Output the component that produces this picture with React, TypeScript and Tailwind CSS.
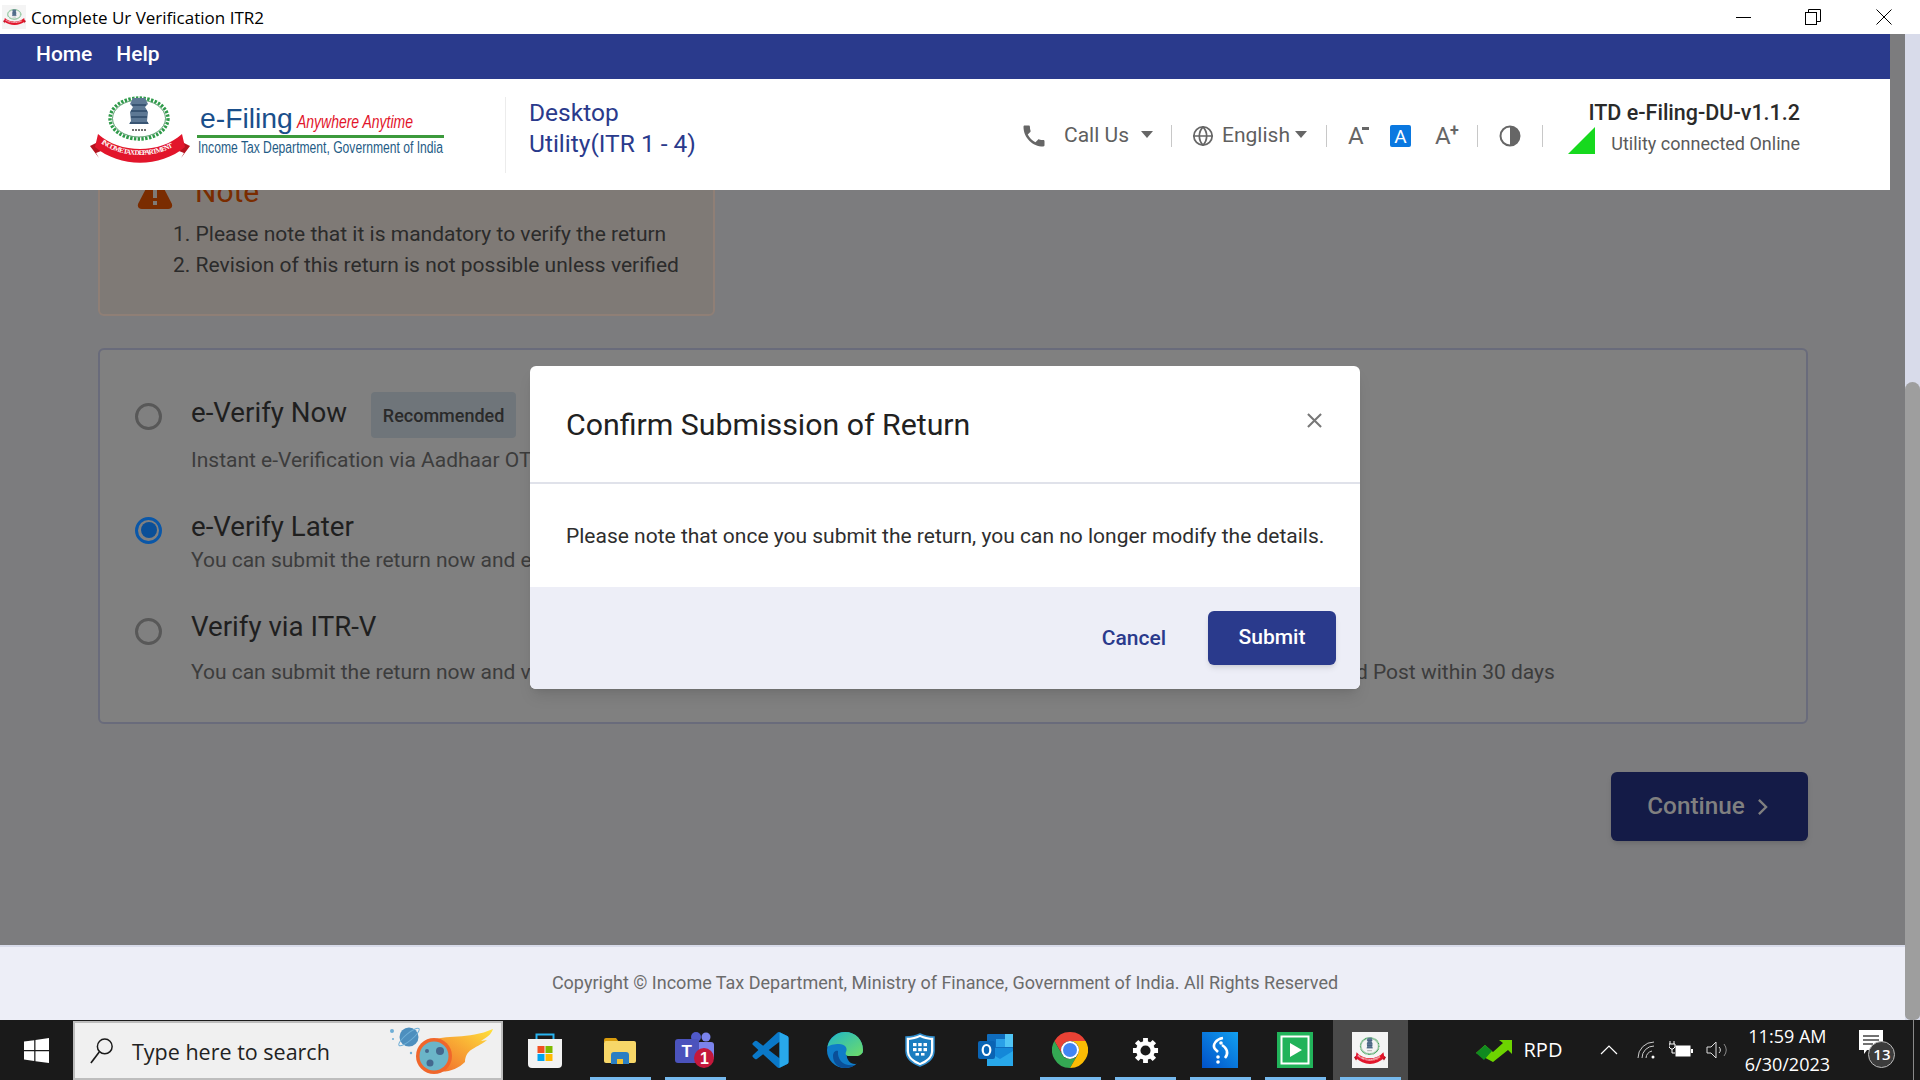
import React from "react";
import { Globe } from "lucide-react";

const roboto = "font-['Roboto',sans-serif]";

function Seal({ className, id }: { className?: string; id: string }) {
  return (
    <svg viewBox="0 0 100 67" preserveAspectRatio="none" className={className}>
      <ellipse cx="49" cy="22.5" rx="29" ry="20.5" fill="none" stroke="#2f9a4a" strokeWidth="3.4" strokeDasharray="2.4 1.4" />
      <ellipse cx="49" cy="22.5" rx="26.5" ry="18.5" fill="none" stroke="#1c7a38" strokeWidth="0.7" />
      <path d="M43 2h12l3 6-3 3 3 5-1 9 2 3H39l2-3-1-9 3-5-3-3z" fill="#5d7894" />
      <path d="M42 9h14M41 15h16M41 21h16M40 27h18" stroke="#2e4a68" strokeWidth="1.4" />
      <path d="M42 34h14" stroke="#444" strokeWidth="1.6" strokeDasharray="2 1" />
      <path d="M0 50l8-4 3 9-5 2 3 5z" fill="#b5121e" />
      <path d="M100 50l-8-4-3 9 5 2-3 5z" fill="#b5121e" />
      <path d="M8 46l5 8 2-3z" fill="#23468f" />
      <path d="M92 46l-5 8-2-3z" fill="#23468f" />
      <path d="M8 38C30 58 70 58 92 38l3 13C70 72 30 72 5 51z" fill="#e2152b" />
      <path id={id} d="M11 47C32 63 68 63 89 47" fill="none" />
      <text fill="#fff" fontSize="7" fontWeight="700" fontFamily="Liberation Serif, serif">
        <textPath href={`#${id}`} textLength="76">INCOME TAX DEPARTMENT</textPath>
      </text>
    </svg>
  );
}

function Logo() {
  return (
    <div className="w-[360px] h-[70px] flex items-start shrink-0 mb-[7px]">
      <Seal id="ribLogo" className="w-[100px] h-[67px] shrink-0" />
      <svg viewBox="0 0 260 70" className="w-[260px] h-[70px] shrink-0">
        <text x="10" y="31.5" fontSize="28.3" fill="#1a4f8b" fontFamily="Liberation Sans, sans-serif">e-Filing</text>
        <text x="107" y="32" fontSize="18" fontStyle="italic" fill="#e2152b" fontFamily="Liberation Sans, sans-serif" textLength="116" lengthAdjust="spacingAndGlyphs">Anywhere Anytime</text>
        <rect x="7" y="39" width="247" height="3" fill="#3c9a3c" />
        <text x="8" y="57" fontSize="16" fill="#1f5c86" fontFamily="Liberation Sans, sans-serif" textLength="245" lengthAdjust="spacingAndGlyphs">Income Tax Department, Government of India</text>
      </svg>
    </div>
  );
}

function Sep({ ml }: { ml: string }) {
  return <div className={`w-[1px] h-[22px] bg-[#c8c8c8] shrink-0 ${ml}`} />;
}

function Caret({ ml }: { ml: string }) {
  return <div className={`w-0 h-0 border-l-[6px] border-r-[6px] border-t-[7px] border-l-transparent border-r-transparent border-t-[#666] mb-[4px] shrink-0 ${ml}`} />;
}

function Toolbar() {
  return (
    <div className={`flex items-center text-[21px] text-[#5f5f5f] mt-[3px] ${roboto}`}>
      <svg viewBox="0 0 24 24" className="w-[28px] h-[28px] shrink-0" fill="#666">
        <path d="M6.62 10.79c1.44 2.83 3.76 5.14 6.59 6.59l2.2-2.2c.27-.27.67-.36 1.02-.24 1.12.37 2.33.57 3.57.57.55 0 1 .45 1 1V20c0 .55-.45 1-1 1-9.39 0-17-7.61-17-17 0-.55.45-1 1-1h3.5c.55 0 1 .45 1 1 0 1.25.2 2.45.57 3.57.11.35.03.74-.25 1.02l-2.2 2.2z" />
      </svg>
      <span className="ml-[16px] w-[66px] whitespace-nowrap">Call Us</span>
      <Caret ml="ml-[11px]" />
      <Sep ml="ml-[18px]" />
      <Globe className="w-[22px] h-[22px] ml-[20px] shrink-0" strokeWidth={1.9} color="#666" />
      <span className="ml-[8px] w-[70px] whitespace-nowrap">English</span>
      <Caret ml="ml-[3px]" />
      <Sep ml="ml-[19px]" />
      <div className="ml-[21px] w-[20px] h-[24px] relative text-[24px] leading-[24px] text-[#666]">
        A<span className="absolute left-[14px] top-[3px] w-[7px] h-[2.5px] bg-[#666]" />
      </div>
      <div className="ml-[22px] w-[21px] h-[22px] bg-[#0a78e0] rounded-[2px] flex items-center justify-center text-white text-[19px] leading-none">A</div>
      <div className="ml-[24px] w-[22px] h-[24px] relative text-[24px] leading-[24px] text-[#666]">
        A<span className="absolute left-[15px] top-[-5px] text-[16px] font-bold">+</span>
      </div>
      <Sep ml="ml-[20px]" />
      <svg viewBox="0 0 22 22" className="w-[22px] h-[22px] ml-[21px] shrink-0">
        <circle cx="11" cy="11" r="9.5" fill="none" stroke="#666" strokeWidth="2" />
        <path d="M11 1.5a9.5 9.5 0 0 1 0 19z" fill="#666" />
      </svg>
      <Sep ml="ml-[21px]" />
    </div>
  );
}

function Status() {
  return (
    <div className={`ml-[25px] w-[232px] flex flex-col mb-[14px] ${roboto}`}>
      <div className="h-[31px] leading-[31px] text-right text-[21.5px] font-medium text-[#2a2a2a] whitespace-nowrap">ITD e-Filing-DU-v1.1.2</div>
      <div className="h-[31px] flex items-center justify-between">
        <svg viewBox="0 0 27 27" className="w-[27px] h-[27px] shrink-0 mb-[5px]"><path d="M27 0V27H0z" fill="#16d91e" /></svg>
        <span className="text-[18px] leading-[31px] text-[#5a5a5a] whitespace-nowrap">Utility connected Online</span>
      </div>
    </div>
  );
}

function Radio({ on }: { on?: boolean }) {
  return (
    <div className="w-[27px] h-[34px] flex items-center mt-[4px] shrink-0">
      {on ? (
        <div className="w-[27px] h-[27px] rounded-full border-[3px] border-[#0a57a8] flex items-center justify-center">
          <div className="w-[16px] h-[16px] rounded-full bg-[#0a4f98]" />
        </div>
      ) : (
        <div className="w-[27px] h-[27px] rounded-full border-[3px] border-[#585858]" />
      )}
    </div>
  );
}

function Option({ on, label, pill, sub, mt, gap, lift }: { on?: boolean; label: string; pill?: boolean; sub: string; mt: string; gap: string; lift?: boolean }) {
  return (
    <div className={`flex gap-[29px] ${mt}`}>
      <Radio on={on} />
      <div className="flex flex-col">
        <div className={`h-[34px] flex items-center text-[27.7px] text-[#1f1f1f] whitespace-nowrap ${lift ? "" : "pt-[2px]"}`}>
          {label}
          {pill && (
            <span className="ml-[24px] w-[145px] h-[46px] mt-[4px] shrink-0 rounded-[4px] bg-[#6f757a] text-[18px] font-medium text-[#2a2a2a] flex items-center justify-center">Recommended</span>
          )}
        </div>
        <div className={`h-[30px] leading-[30px] text-[21px] text-[#3c3c3c] whitespace-nowrap ${gap}`}>{sub}</div>
      </div>
    </div>
  );
}

function Content() {
  return (
    <div className={`flex-1 overflow-hidden pl-[98px] pr-[97px] ${roboto}`}>
      <div className="-mt-[50px] w-[617px] h-[176px] rounded-[6px] border-[2px] border-[#8f7f76] bg-[#7f7a76] flex pl-[37px]">
        <svg viewBox="0 0 36 36" className="w-[36px] h-[36px] mt-[32px] shrink-0">
          <path d="M18 2c1.6 0 2.8.8 3.6 2.2l13 25c1.5 3-.2 5.8-3.4 5.8H4.8c-3.2 0-4.9-2.8-3.4-5.8l13-25C15.2 2.8 16.4 2 18 2z" fill="#7a2c00" />
          <rect x="16" y="14" width="4" height="10" fill="#7f7a76" />
          <rect x="16" y="27" width="4" height="4" fill="#7f7a76" />
        </svg>
        <div className="ml-[22px] flex flex-col">
          <div className="h-[36px] mt-[32px] leading-[36px] text-[30px] text-[#7a2c00]">Note</div>
          <ol className="mt-[9px] -ml-[22px] text-[21px] leading-[31px] text-[#2b2b2b] whitespace-nowrap">
            <li>1. Please note that it is mandatory to verify the return</li>
            <li>2. Revision of this return is not possible unless verified</li>
          </ol>
        </div>
      </div>
      <div className="mt-[32px] h-[376px] rounded-[6px] border-[2px] border-[#696b7b] bg-[#808080] pl-[35px] pt-[45px]">
        <Option label="e-Verify Now" pill sub="Instant e-Verification via Aadhaar OTP" mt="" gap="mt-[16px]" />
        <Option on label="e-Verify Later" sub="You can submit the return now and e-Verify later" mt="mt-[34px]" gap="mt-[2px]" />
        <Option lift label="Verify via ITR-V" sub="You can submit the return now and verify by sending signed physical copy of ITR-V to Centralized Processing Centers by Speed Post within 30 days" mt="mt-[35px]" gap="mt-[13px]" />
      </div>
      <div className="mt-[48px] flex justify-end">
        <button className="w-[197px] h-[69px] pr-[4px] rounded-[6px] bg-[#141b47] shadow-md text-[#808080] text-[24.3px] font-medium flex items-center justify-center gap-[12px]">
          Continue
          <svg viewBox="0 0 12 20" className="w-[11px] h-[18px]"><path d="M2 2l8 8-8 8" fill="none" stroke="#808080" strokeWidth="2.6" /></svg>
        </button>
      </div>
    </div>
  );
}

function Modal() {
  return (
    <div className={`absolute left-[530px] top-[366px] w-[830px] h-[323px] rounded-[6px] overflow-hidden bg-white flex flex-col shadow-lg ${roboto}`}>
      <div className="h-[118px] border-b-[2px] border-[#e0e2ea] flex items-start justify-between pl-[36px] pr-[38px] shrink-0">
        <span className="mt-[41px] text-[30.3px] leading-[36px] text-[#212121]">Confirm Submission of Return</span>
        <svg viewBox="0 0 16 16" className="w-[15px] h-[15px] mt-[47px]"><path d="M1 1l14 14M15 1L1 15" stroke="#777" strokeWidth="2.2" /></svg>
      </div>
      <div className="h-[103px] pl-[36px] pt-[37px] text-[21px] leading-[30px] text-[#2e2e2e] whitespace-nowrap shrink-0">
        Please note that once you submit the return, you can no longer modify the details.
      </div>
      <div className="flex-1 bg-[#edeef7] flex justify-end items-start pt-[24px] pr-[24px]">
        <span className="mt-[13px] text-[21px] leading-[28px] font-medium text-[#2a3a8c]">Cancel</span>
        <button className="ml-[42px] w-[128px] h-[54px] rounded-[6px] bg-[#2a3a8c] shadow-md text-white text-[21px] font-medium">Submit</button>
      </div>
    </div>
  );
}

const Store = () => (
  <svg viewBox="0 0 36 36" className="w-[36px] h-[36px]">
    <path d="M9.5 8V2.5h17V8" fill="none" stroke="#28b4f0" strokeWidth="2" />
    <path d="M1 7h34v25a4 4 0 0 1-4 4H5a4 4 0 0 1-4-4z" fill="#f2f2f2" />
    <rect x="10.5" y="14" width="7" height="7" fill="#f25022" />
    <rect x="18.5" y="14" width="7" height="7" fill="#7fba00" />
    <rect x="10.5" y="22" width="7" height="7" fill="#00a4ef" />
    <rect x="18.5" y="22" width="7" height="7" fill="#ffb900" />
  </svg>
);
const Explorer = () => (
  <svg viewBox="0 0 32 27" className="w-[32px] h-[27px]">
    <path d="M0 3a2 2 0 0 1 2-2h10l3 4H0z" fill="#d89b0c" />
    <rect x="0" y="4" width="32" height="22" rx="2" fill="#f7d768" />
    <path d="M7 27V18a3 3 0 0 1 3-3h12a3 3 0 0 1 3 3v9h-6v-5h-6v5z" fill="#2a7fc4" />
    <rect x="13" y="22" width="6" height="5" fill="#f2c230" />
  </svg>
);
const Teams = () => (
  <svg viewBox="0 0 40 36" className="w-[40px] h-[36px]">
    <circle cx="31" cy="5" r="4.5" fill="#7b83eb" />
    <circle cx="21" cy="5" r="5" fill="#5059c9" />
    <rect x="22" y="10" width="17" height="18" rx="3" fill="#7b83eb" />
    <rect x="0" y="7" width="24" height="24" rx="3" fill="#4b53bc" />
    <text x="6.5" y="25" fontSize="17" fontWeight="700" fill="#fff" fontFamily="Liberation Sans, sans-serif">T</text>
    <circle cx="29" cy="26" r="10" fill="#c4183c" />
    <text x="25" y="32" fontSize="16" fontWeight="700" fill="#fff" fontFamily="Liberation Sans, sans-serif">1</text>
  </svg>
);
const VSCode = () => (
  <svg viewBox="0 0 100 100" className="w-[37px] h-[36px]">
    <path fillRule="evenodd" d="M70.9 99.3a6.2 6.2 0 0 0 5-.2l20.6-9.9a6.2 6.2 0 0 0 3.5-5.6V16.4a6.2 6.2 0 0 0-3.5-5.6L75.9.9a6.2 6.2 0 0 0-7.1 1.2L29.4 38 12.2 25a4.2 4.2 0 0 0-5.3.2l-5.5 5a4.2 4.2 0 0 0 0 6.2L16.3 50 1.4 63.6a4.2 4.2 0 0 0 0 6.2l5.5 5a4.2 4.2 0 0 0 5.3.2L29.4 62l39.4 36a6.2 6.2 0 0 0 2.1 1.3zM75 27.3 45.1 50 75 72.7z" fill="#0a78c8" />
    <path d="M75 .5l21.5 10.3a6.2 6.2 0 0 1 3.5 5.6v67.2a6.2 6.2 0 0 1-3.5 5.6L75 99.5z" fill="#28a8ea" />
  </svg>
);
const Edge = () => (
  <svg viewBox="0 0 36 36" className="w-[36px] h-[36px]">
    <defs>
      <linearGradient id="edgeA" x1="0" y1="0" x2="1" y2="1">
        <stop offset="0" stopColor="#1fb5c8" />
        <stop offset="1" stopColor="#6fdc68" />
      </linearGradient>
    </defs>
    <circle cx="18" cy="18" r="18" fill="#0f7cc8" />
    <path d="M20 21h16v7c-3 4-8 5-12 3-3-2-5-6-4-10z" fill="#1a1a1a" />
    <path d="M.5 15C2 6 10 0 18 0c11 0 18 8 18 18 0 4-3 6-7 6h-7c-3 0-4-2-3-4 2-4-1-8-7-8-5 0-10 1-11.5 3z" fill="url(#edgeA)" />
    <path d="M11 19c-1 9 6 16 17 14-3 2-6 3-10 3-8 0-12-6-12-12 0-3 2-6 5-5z" fill="#0a4f98" />
  </svg>
);
const Shield = () => (
  <svg viewBox="0 0 30 34" className="w-[30px] h-[34px]">
    <path d="M15 1c4 2 9 3 14 3v14c0 8-6 12-14 15C7 30 1 26 1 18V4c5 0 10-1 14-3z" fill="#fff" stroke="#2f8fd0" strokeWidth="1.5" />
    <path d="M15 4c4 2 7 2 11 3v11c0 6-5 9-11 12-6-3-11-6-11-12V7c4-1 7-1 11-3z" fill="#1b7dc0" />
    <g fill="#fff">
      <rect x="8" y="10" width="3.5" height="3.2" /><rect x="13.2" y="10" width="3.5" height="3.2" /><rect x="18.5" y="10" width="3.5" height="3.2" />
      <rect x="8" y="15" width="3.5" height="3.2" /><rect x="13.2" y="15" width="3.5" height="3.2" /><rect x="18.5" y="15" width="3.5" height="3.2" />
      <rect x="10.5" y="20" width="3.5" height="2.6" /><rect x="16" y="20" width="3.5" height="2.6" />
    </g>
  </svg>
);
const Outlook = () => (
  <svg viewBox="0 0 35 32" className="w-[35px] h-[32px]">
    <rect x="9" y="0" width="26" height="16" rx="1" fill="#0f6cbd" />
    <rect x="18" y="5" width="9" height="8" fill="#2aa0e8" />
    <rect x="27" y="0" width="8" height="13" fill="#50c5f5" />
    <rect x="9" y="14" width="26" height="18" rx="1" fill="#1488d8" />
    <path d="M9 17l13 8 13-8v15H9z" fill="#28a8ea" />
    <rect x="0" y="7" width="17" height="18" rx="2" fill="#0a64b4" />
    <ellipse cx="8.5" cy="16" rx="3.8" ry="5" fill="none" stroke="#fff" strokeWidth="2.2" />
  </svg>
);
const Chrome = () => (
  <svg viewBox="0 0 36 36" className="w-[36px] h-[36px]">
    <path d="M2.41 9A18 18 0 0 1 33.59 9H18A9 9 0 0 0 10.2 22.5z" fill="#e94235" />
    <path d="M2.41 9A18 18 0 0 0 18 36L25.8 22.5A9 9 0 0 1 10.2 22.5z" fill="#34a853" />
    <path d="M33.59 9A18 18 0 0 1 18 36L25.8 22.5A9 9 0 0 0 18 9z" fill="#fbbc04" />
    <circle cx="18" cy="18" r="9" fill="#fff" />
    <circle cx="18" cy="18" r="7" fill="#4285f4" />
  </svg>
);
const Gear = () => (
  <svg viewBox="0 0 28 28" className="w-[27px] h-[27px]">
    <circle cx="14" cy="14" r="7.5" fill="none" stroke="#fff" strokeWidth="4.5" />
    <path d="M14 1v5M14 22v5M4.8 4.8l3.5 3.5M23.2 4.8l-3.5 3.5M4.8 23.2l3.5-3.5M23.2 23.2l-3.5-3.5M1 14h5M22 14h5" stroke="#fff" strokeWidth="5" />
  </svg>
);
const SApp = () => (
  <svg viewBox="0 0 36 36" className="w-[36px] h-[36px]">
    <defs>
      <linearGradient id="sA" x1="0" y1="1" x2="1" y2="0"><stop offset="0" stopColor="#0050c8" /><stop offset="1" stopColor="#12a0f0" /></linearGradient>
    </defs>
    <rect width="36" height="36" fill="url(#sA)" />
    <path d="M21 6c-7 1-11 7-8 11l3 3" fill="none" stroke="#fff" strokeWidth="2.6" />
    <path d="M20 13c5 3 7 8 3 13" fill="none" stroke="#fff" strokeWidth="2.6" />
    <circle cx="19" cy="11" r="1.8" fill="#fff" />
    <circle cx="16" cy="25" r="1.8" fill="#fff" />
    <circle cx="16" cy="30" r="1.8" fill="#fff" />
  </svg>
);
const Player = () => (
  <svg viewBox="0 0 36 36" className="w-[36px] h-[36px]">
    <rect width="36" height="36" fill="#21b35a" />
    <rect x="4.5" y="4.5" width="27" height="27" fill="#21b35a" stroke="#fff" strokeWidth="2" />
    <path d="M13 11l12 7-12 7z" fill="#fff" />
  </svg>
);
const ItdApp = () => (
  <div className="w-[36px] h-[36px] bg-[#f4f4f4] flex items-center justify-center"><Seal id="ribTask" className="w-[32px] h-[27px]" /></div>
);

function Slot({ icon, run, active }: { icon: React.ReactNode; run?: boolean; active?: boolean }) {
  return (
    <div className={`w-[75px] h-full flex items-center justify-center relative shrink-0 ${active ? "bg-[#4a4a4a]" : ""}`}>
      {icon}
      {run && <span className="absolute bottom-0 left-[7px] right-[7px] h-[3px] bg-[#76b9ed]" />}
    </div>
  );
}

function Taskbar() {
  return (
    <div className="h-[60px] bg-[#1a1a1a] flex items-center shrink-0 font-['Open_Sans',sans-serif]">
      <div className="w-[73px] flex justify-center shrink-0">
        <svg viewBox="0 0 24 24" className="w-[25px] h-[25px]" fill="#fff">
          <path d="M0 3.4l9.8-1.3v9.4H0zM11 1.9L24 0v11.5H11zM0 12.6h9.8V22L0 20.7zM11 12.6h13V24l-13-1.8z" />
        </svg>
      </div>
      <div className="w-[430px] h-[59px] mt-[1px] bg-[#f0f0f0] border-[2px] border-[#bdbdbd] flex items-center pl-[15px] shrink-0">
        <svg viewBox="0 0 26 30" className="w-[24px] h-[28px] shrink-0">
          <circle cx="16" cy="10" r="8" fill="none" stroke="#1a1a1a" strokeWidth="1.6" />
          <path d="M10 16L1 28" stroke="#1a1a1a" strokeWidth="1.8" />
        </svg>
        <span className="ml-[18px] mt-[4px] w-[198px] text-[21.5px] text-[#222] whitespace-nowrap">Type here to search</span>
        <svg viewBox="0 0 103 47" className="w-[103px] h-[47px] ml-[60px] shrink-0">
          <defs>
            <linearGradient id="tail" x1="0" y1="1" x2="1" y2="0"><stop offset="0" stopColor="#f0662b" /><stop offset="1" stopColor="#ffe23c" /></linearGradient>
          </defs>
          <circle cx="2" cy="4" r="2" fill="#6eaed6" />
          <circle cx="3" cy="12" r="1" fill="#6eaed6" />
          <circle cx="21" cy="26" r="1.2" fill="#6eaed6" />
          <circle cx="19" cy="10" r="9.5" fill="#4d8fbe" />
          <ellipse cx="19" cy="10" rx="13" ry="3.5" fill="none" stroke="#6eaed6" strokeWidth="1" transform="rotate(-40 19 10)" />
          <path d="M40 14C55 7 78 13 103 2c-2 6-6 8-12 12 2 0 4-1 6-1-6 5-12 7-16 10-3 2-6 6-6 12-8 8-20 12-34 8z" fill="url(#tail)" />
          <circle cx="44" cy="29" r="18" fill="#f0662b" />
          <circle cx="44" cy="29" r="14.5" fill="#6bb5c8" />
          <circle cx="50" cy="24" r="4" fill="#44688e" /><circle cx="40" cy="36" r="3.5" fill="#44688e" /><circle cx="37" cy="24" r="2" fill="#44688e" />
        </svg>
      </div>
      <div className="w-[4.5px] shrink-0" />
      <Slot icon={<Store />} />
      <Slot icon={<Explorer />} run />
      <Slot icon={<Teams />} run />
      <Slot icon={<VSCode />} />
      <Slot icon={<Edge />} />
      <Slot icon={<Shield />} />
      <Slot icon={<Outlook />} />
      <Slot icon={<Chrome />} run />
      <Slot icon={<Gear />} run />
      <Slot icon={<SApp />} run />
      <Slot icon={<Player />} run />
      <Slot icon={<ItdApp />} run active />
      <svg viewBox="0 0 36 24" className="w-[36px] h-[24px] ml-[68px] shrink-0">
        <path d="M0 15l9-8 8 7L27 5l-4-3h13v14l-4-4-15 12z" fill="#6dd400" />
        <path d="M0 15l9-8 7 6-8 9z" fill="#108a20" />
      </svg>
      <span className="ml-[12px] text-[20px] text-white">RPD</span>
      <svg viewBox="0 0 18 10" className="w-[18px] h-[10px] ml-[38px] shrink-0"><path d="M1 9l8-8 8 8" fill="none" stroke="#fff" strokeWidth="1.2" /></svg>
      <svg viewBox="0 0 18 18" className="w-[18px] h-[18px] ml-[19px] shrink-0" fill="none" stroke="#ccc" strokeWidth="1">
        <path d="M1 17A16 16 0 0 1 17 1M5 17A12 12 0 0 1 17 5M9 17a8 8 0 0 1 6-7" />
        <circle cx="16" cy="16" r="1.5" fill="#fff" stroke="none" />
      </svg>
      <svg viewBox="0 0 24 18" className="w-[24px] h-[18px] ml-[14px] shrink-0">
        <path d="M1 0v3M5 0v3M0 3h6v3l-2 2H2L0 6zM3 8v4h3" stroke="#fff" fill="none" strokeWidth="1" />
        <rect x="6.5" y="4.5" width="15" height="11" fill="#fff" />
        <rect x="22" y="8" width="2" height="4" fill="#fff" />
      </svg>
      <svg viewBox="0 0 22 18" className="w-[22px] h-[18px] ml-[13px] shrink-0" fill="none" stroke="#ddd" strokeWidth="1">
        <path d="M1 6h4l5-5v16l-5-5H1z" /><path d="M13 6a4 4 0 0 1 0 6" /><path d="M18 3a10 10 0 0 1 0 12" stroke="#888" />
      </svg>
      <div className="ml-[15px] w-[88px] shrink-0 flex flex-col items-center text-[18px] leading-[28px] text-white whitespace-nowrap">
        <span>11:59 AM</span>
        <span>6/30/2023</span>
      </div>
      <div className="ml-[26px] w-[40px] h-[44px] relative shrink-0">
        <svg viewBox="0 0 24 24" className="absolute left-[2px] top-[2px] w-[24px] h-[24px]">
          <path d="M0 0h24v20H8l-3 4v-4H0z" fill="#fff" />
          <path d="M4 6h16M4 10h16M4 14h10" stroke="#444" strokeWidth="1.4" />
        </svg>
        <span className="absolute left-[11px] top-[13px] w-[27px] h-[27px] rounded-full border border-[#bbb] bg-[#3c3c3c] text-white text-[15px] font-semibold flex items-center justify-center">13</span>
      </div>
      <div className="ml-auto mr-[6px] w-[1px] h-full bg-[#8a8a8a] shrink-0" />
    </div>
  );
}

export default function App() {
  return (
    <div className="relative w-[1920px] h-[1080px] overflow-hidden flex flex-col bg-white">
      <div className="h-[34px] flex items-center shrink-0">
        <div className="ml-[2px] w-[24px] h-[24px] bg-[#f4f4f4] flex items-center justify-center shrink-0"><Seal id="ribTitle" className="w-[23px] h-[16px]" /></div>
        <span className="ml-[5px] pt-[1px] text-[17px] text-black whitespace-nowrap font-['Open_Sans',sans-serif]">Complete Ur Verification ITR2</span>
        <div className="ml-auto flex items-center">
          <div className="w-[15px] h-[1px] bg-black" />
          <svg viewBox="0 0 16 16" className="w-[16px] h-[16px] ml-[54px]" fill="none" stroke="#000" strokeWidth="1">
            <rect x="0.5" y="3.5" width="11" height="12" /><path d="M3.5 3.5v-3h12v12h-4" />
          </svg>
          <svg viewBox="0 0 16 16" className="w-[16px] h-[16px] ml-[55px] mr-[28px]" fill="none" stroke="#000" strokeWidth="1"><path d="M0.5 0.5l15 15M15.5 0.5l-15 15" /></svg>
        </div>
      </div>
      <div className="flex-1 flex min-h-0">
        <div className="w-[1905px] flex flex-col bg-[#7c7c7e]">
          <div className={`w-[1890px] h-[45px] pb-[4px] bg-[#2a3a8c] flex items-center pl-[36px] gap-[24px] text-white text-[21px] font-medium shrink-0 ${roboto}`}>
            <span>Home</span>
            <span>Help</span>
          </div>
          <div className="w-[1890px] h-[111px] bg-white flex items-center pl-[90px] pr-[90px] shrink-0 relative z-10">
            <Logo />
            <div className="ml-[55px] w-[1px] h-[76px] bg-[#ececec] shrink-0" />
            <div className={`ml-[23px] mb-[14px] text-[24.5px] leading-[31px] text-[#2a3a8c] whitespace-nowrap ${roboto}`}>
              <div>Desktop</div>
              <div>Utility(ITR 1 - 4)</div>
            </div>
            <div className="ml-auto flex items-center">
              <Toolbar />
              <Status />
            </div>
          </div>
          <Content />
          <div className={`h-[75px] border-t-[2px] border-[#d8dbea] bg-[#edeef7] flex items-center justify-center pr-[15px] pb-[2px] text-[18px] text-[#6b6b6b] shrink-0 ${roboto}`}>
            Copyright © Income Tax Department, Ministry of Finance, Government of India. All Rights Reserved
          </div>
        </div>
        <div className="w-[15px] bg-[#d8dbea] flex flex-col justify-end">
          <div className="h-[638px] rounded-t-[8px] rounded-b-[6px] bg-[#9e9e9e]" />
        </div>
      </div>
      <Taskbar />
      <Modal />
    </div>
  );
}
